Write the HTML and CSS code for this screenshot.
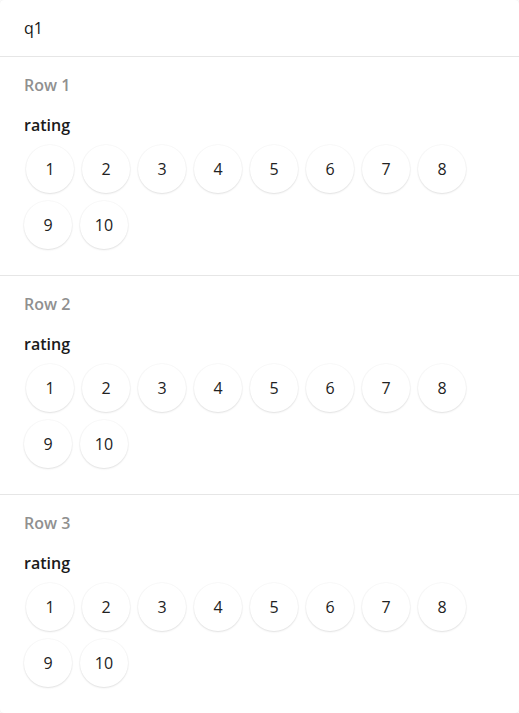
FILE: index.html
```html
<!DOCTYPE html>
<html>
<head>
<meta charset="utf-8">
<link rel="stylesheet" href="styles.css">
</head>
<body>
<div class="card">
  <div class="header">q1</div>
  <div class="section">
    <div class="row-label">Row 1</div>
    <div class="q-label">rating</div>
    <div class="choices">
      <div class="choice">1</div><div class="choice">2</div><div class="choice">3</div><div class="choice">4</div><div class="choice">5</div><div class="choice">6</div><div class="choice">7</div><div class="choice">8</div><div class="choice">9</div><div class="choice">10</div>
    </div>
  </div>
  <div class="section">
    <div class="row-label">Row 2</div>
    <div class="q-label">rating</div>
    <div class="choices">
      <div class="choice">1</div><div class="choice">2</div><div class="choice">3</div><div class="choice">4</div><div class="choice">5</div><div class="choice">6</div><div class="choice">7</div><div class="choice">8</div><div class="choice">9</div><div class="choice">10</div>
    </div>
  </div>
  <div class="section">
    <div class="row-label">Row 3</div>
    <div class="q-label">rating</div>
    <div class="choices">
      <div class="choice">1</div><div class="choice">2</div><div class="choice">3</div><div class="choice">4</div><div class="choice">5</div><div class="choice">6</div><div class="choice">7</div><div class="choice">8</div><div class="choice">9</div><div class="choice">10</div>
    </div>
  </div>
</div>
</body>
</html>
```
FILE: styles.css
```css
html, body {
  margin: 0;
  padding: 0;
  background: #ffffff;
}
body {
  font-family: "Open Sans", "Noto Sans", sans-serif;
  color: #161616;
}
.card {
  width: 519px;
  height: 713px;
  overflow: hidden;
  border-radius: 4px;
  box-shadow: 0 0 2px rgba(0,0,0,0.12);
  background: #fff;
}
.header {
  height: 56px;
  line-height: 56px;
  padding: 0 24px;
  font-size: 16px;
  border-bottom: 1px solid #e6e6e6;
}
.section {
  padding: 18px 24px 26px;
  border-bottom: 1px solid #e6e6e6;
}
.row-label {
  font-size: 16px;
  line-height: 20px;
  font-weight: 600;
  color: #909090;
}
.q-label {
  margin-top: 20px;
  font-size: 16px;
  line-height: 20px;
  font-weight: 600;
  color: #1a1a1a;
}
.choices {
  margin-top: 10px;
  display: flex;
  flex-wrap: wrap;
  gap: 8px;
  width: 448px;
}
.choice {
  width: 48px;
  height: 48px;
  border-radius: 50%;
  background: #fff;
  box-shadow: 0 0 0 1px rgba(0,0,0,0.025), 0 1px 2px rgba(0,0,0,0.1);
  display: flex;
  align-items: center;
  justify-content: center;
  font-size: 16px;
  color: #222;
}
.choice:first-child {
  margin-left: 2px;
}
```
